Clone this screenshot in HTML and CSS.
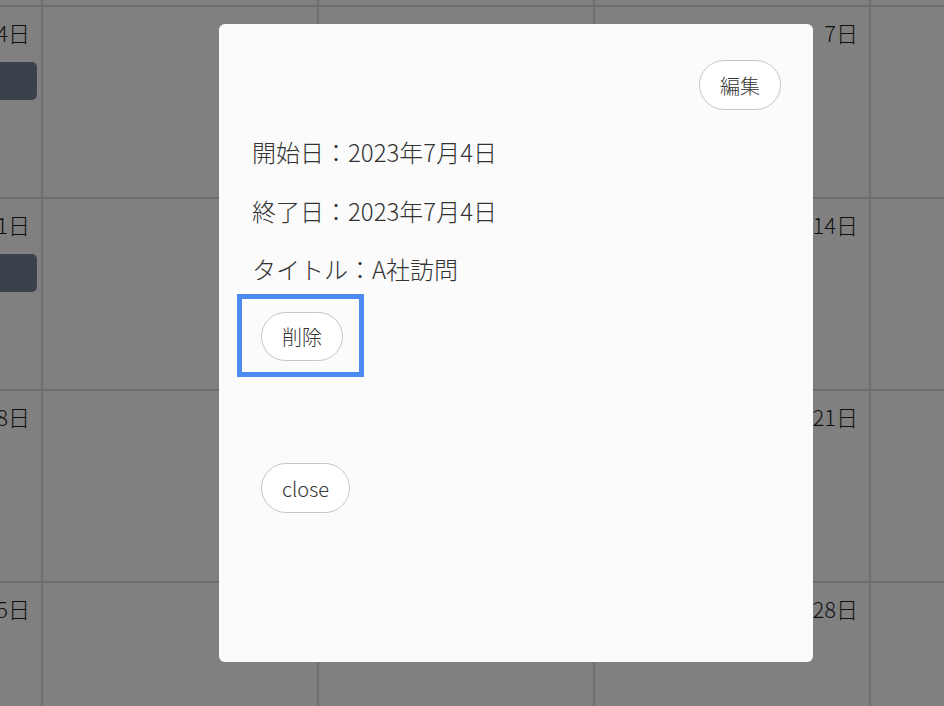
FILE: index.html
```html
<!DOCTYPE html>
<html lang="ja">
<head>
<meta charset="utf-8">
<title>カレンダー</title>
<link rel="stylesheet" href="styles.css">
</head>
<body>
<div class="calendar">
  <div class="cell"><span class="date">26日</span></div>
  <div class="cell"><span class="date">27日</span></div>
  <div class="cell"><span class="date">28日</span></div>
  <div class="cell"><span class="date">29日</span></div>
  <div class="cell"><span class="date">30日</span></div>

  <div class="cell"><span class="date">4日</span><div class="event"></div></div>
  <div class="cell"><span class="date">5日</span></div>
  <div class="cell"><span class="date">6日</span></div>
  <div class="cell"><span class="date">7日</span></div>
  <div class="cell"><span class="date">8日</span></div>

  <div class="cell"><span class="date">11日</span><div class="event"></div></div>
  <div class="cell"><span class="date">12日</span></div>
  <div class="cell"><span class="date">13日</span></div>
  <div class="cell"><span class="date">14日</span></div>
  <div class="cell"><span class="date">15日</span></div>

  <div class="cell"><span class="date">18日</span></div>
  <div class="cell"><span class="date">19日</span></div>
  <div class="cell"><span class="date">20日</span></div>
  <div class="cell"><span class="date">21日</span></div>
  <div class="cell"><span class="date">22日</span></div>

  <div class="cell"><span class="date">25日</span></div>
  <div class="cell"><span class="date">26日</span></div>
  <div class="cell"><span class="date">27日</span></div>
  <div class="cell"><span class="date">28日</span></div>
  <div class="cell"><span class="date">29日</span></div>
</div>

<div class="modal">
  <div class="modal-head">
    <button class="btn" type="button">編集</button>
  </div>
  <p class="info first">開始日：2023年7月4日</p>
  <p class="info">終了日：2023年7月4日</p>
  <p class="info">タイトル：A社訪問</p>
  <form class="delete-form">
    <button class="btn btn-delete" type="button">削除</button>
  </form>
  <div class="close-row">
    <button class="btn" type="button">close</button>
  </div>
</div>
</body>
</html>
```
FILE: styles.css
```css
html, body {
  margin: 0;
  padding: 0;
  width: 944px;
  height: 706px;
  overflow: hidden;
  background: #808080;
  font-family: "Noto Sans CJK JP", "Noto Sans", sans-serif;
}

.calendar {
  display: grid;
  grid-template-columns: repeat(5, 274px);
  grid-auto-rows: 190px;
  gap: 2px;
  background: #6e6e6e;
  width: max-content;
  margin-left: -233px;
  margin-top: -185px;
}

.cell {
  background: #808080;
  display: flex;
  flex-direction: column;
  align-items: flex-end;
  padding: 9px 4px 0 0;
}

.date {
  font-size: 22px;
  line-height: 32px;
  color: #111;
  padding-right: 7px;
  font-weight: 300;
}

.event {
  align-self: stretch;
  height: 38px;
  margin-top: 14px;
  background: #3c424b;
  border-radius: 5px;
}

.modal {
  position: absolute;
  left: 219px;
  top: 24px;
  width: 594px;
  height: 638px;
  box-sizing: border-box;
  padding: 36px 32px 0 23px;
  background: #fbfbfb;
  border-radius: 6px;
  color: #333;
  font-family: "Noto Sans CJK JP Light", "Noto Sans CJK JP DemiLight", "Noto Sans CJK JP", sans-serif;
}

.modal-head {
  display: flex;
  justify-content: flex-end;
}

.btn {
  height: 50px;
  box-sizing: border-box;
  padding: 0 20px;
  border: 1px solid #c6c6c6;
  border-radius: 25px;
  background: #fff;
  font-family: "Noto Sans CJK JP Light", "Noto Sans CJK JP DemiLight", "Noto Sans CJK JP", sans-serif;
  font-size: 20px;
  font-weight: 300;
  color: #333;
}

.info {
  margin: 22.5px 0 0;
  padding-left: 10px;
  font-size: 24px;
  line-height: 36px;
  font-weight: 300;
}

.info.first {
  margin-top: 24px;
}

.delete-form {
  width: 117px;
  height: 73px;
  box-sizing: border-box;
  margin: 12px 0 0;
  padding: 13px 0 0 19px;
  outline: 5px solid #4c89f0;
}

.btn-delete {
  height: 49px;
}

.close-row {
  margin-top: 91px;
  padding-left: 19px;
}
```
